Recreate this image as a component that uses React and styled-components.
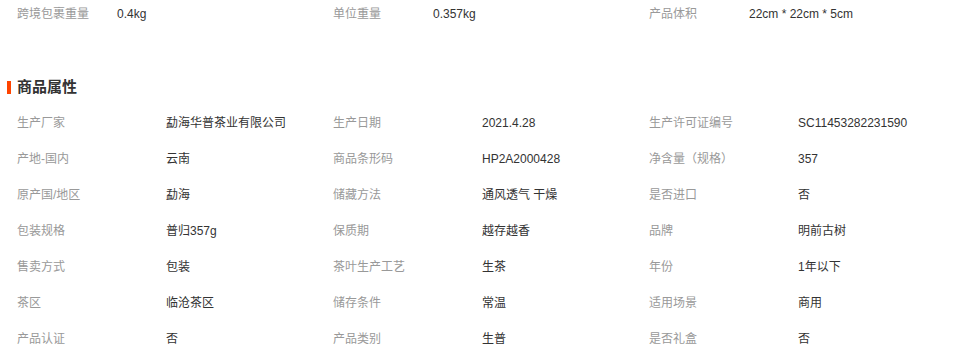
import styled, { createGlobalStyle } from "styled-components";

const GlobalStyle = createGlobalStyle`
  body {
    margin: 0;
    background: #fff;
    font-family: "Liberation Sans", "Noto Sans CJK SC", sans-serif;
  }
`;

const Container = styled.div`
  width: 960px;
  height: 354px;
  overflow: hidden;
`;

const Grid = styled.div`
  display: grid;
  grid-template-columns: repeat(3, 316px);
  padding-left: 17px;
`;

const Cell = styled.div`
  display: flex;
  height: ${(p) => p.$h}px;
  line-height: ${(p) => p.$h}px;
  font-size: 12px;
  white-space: nowrap;
`;

const Label = styled.span`
  width: ${(p) => p.$w}px;
  flex-shrink: 0;
  color: #999;
`;

const Value = styled.span`
  color: #333;
`;

const Title = styled.h3`
  margin: 49px 0 8px 7px;
  height: 20px;
  line-height: 20px;
  font-size: 15px;
  font-weight: bold;
  color: #333;
  display: flex;
  align-items: center;
  gap: 6px;
  &::before {
    content: "";
    width: 4px;
    height: 13px;
    background: #ff4400;
  }
`;

const top = [
  ["跨境包裹重量", "0.4kg"],
  ["单位重量", "0.357kg"],
  ["产品体积", "22cm * 22cm * 5cm"],
];

const attrs = [
  ["生产厂家", "勐海华普茶业有限公司"],
  ["生产日期", "2021.4.28"],
  ["生产许可证编号", "SC11453282231590"],
  ["产地-国内", "云南"],
  ["商品条形码", "HP2A2000428"],
  ["净含量（规格）", "357"],
  ["原产国/地区", "勐海"],
  ["储藏方法", "通风透气 干燥"],
  ["是否进口", "否"],
  ["包装规格", "普归357g"],
  ["保质期", "越存越香"],
  ["品牌", "明前古树"],
  ["售卖方式", "包装"],
  ["茶叶生产工艺", "生茶"],
  ["年份", "1年以下"],
  ["茶区", "临沧茶区"],
  ["储存条件", "常温"],
  ["适用场景", "商用"],
  ["产品认证", "否"],
  ["产品类别", "生普"],
  ["是否礼盒", "否"],
];

const App = () => {
  return (
    <Container>
      <GlobalStyle />
      <Grid>
        {top.map(([l, v]) => (
          <Cell key={l} $h={28}>
            <Label $w={100}>{l}</Label>
            <Value>{v}</Value>
          </Cell>
        ))}
      </Grid>
      <Title>商品属性</Title>
      <Grid>
        {attrs.map(([l, v]) => (
          <Cell key={l} $h={36}>
            <Label $w={149}>{l}</Label>
            <Value>{v}</Value>
          </Cell>
        ))}
      </Grid>
    </Container>
  );
};

export default App;
